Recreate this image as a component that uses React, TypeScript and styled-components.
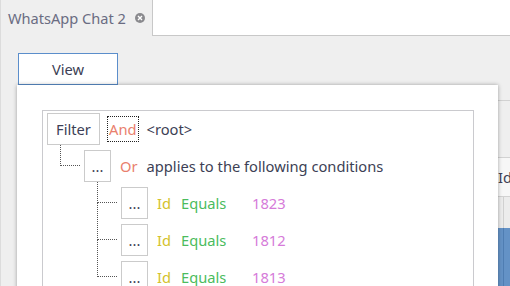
import React from "react";
import styled, { createGlobalStyle } from "styled-components";

const Global = createGlobalStyle`
  html, body { margin: 0; padding: 0; }
  body { font-family: "Noto Sans", "Open Sans", sans-serif; }
`;

const Page = styled.div`
  width: 510px;
  height: 286px;
  overflow: hidden;
  background: #ffffff;
  display: flex;
  flex-direction: column;
`;

const TabStrip = styled.div`
  display: flex;
  height: 36px;
  flex: none;
`;

const Tab = styled.div`
  width: 153px;
  background: #efefef;
  border-left: 1px solid #dcdcdc;
  border-right: 1px solid #c8c8c8;
  display: flex;
  align-items: center;
  padding-left: 7px;
  box-sizing: border-box;
  gap: 9px;
  font-size: 14.6px;
  color: #6a6c82;
`;

const CloseIcon = styled.span`
  width: 10px;
  height: 10px;
  border-radius: 50%;
  background: #8a8a8e;
  display: inline-flex;
  align-items: center;
  justify-content: center;
`;

const TabFiller = styled.div`
  flex: 1;
  border-bottom: 1px solid #c8c8c8;
`;

const Body = styled.div`
  flex: 1;
  background: #efefef;
  border-left: 1px solid #dcdcdc;
  position: relative;
  display: flex;
  flex-direction: column;
`;

const Toolbar = styled.div`
  display: flex;
  padding: 17px 0 0 17px;
`;

const ViewButton = styled.div`
  width: 100px;
  height: 32px;
  box-sizing: border-box;
  border: 1px solid #5b8ecb;
  background: #ffffff;
  display: flex;
  align-items: center;
  justify-content: center;
  font-size: 14.7px;
  color: #3d3f55;
`;

const DataArea = styled.div`
  margin-top: 15px;
  margin-left: 140px;
  border-top: 1px solid #d2d2d2;
  display: flex;
  flex-direction: column;
  flex: 1;
`;

const HeaderRow = styled.div`
  margin-top: 56px;
  height: 38px;
  border-top: 1px solid #d2d2d2;
  border-bottom: 1px solid #d2d2d2;
  background: #f7f7f7;
  display: flex;
  align-items: center;
  padding-left: 357px;
  font-size: 14.7px;
  color: #3d3f55;
`;

const FilterRowBg = styled.div`
  height: 31px;
  background: #ececec;
  display: flex;
`;

const ColumnCell = styled.div<{ $w: number }>`
  width: ${(p) => p.$w}px;
  border-right: 1px solid #d0d0d0;
  flex: none;
`;

const BlueRows = styled.div`
  flex: 1;
  background: #6492c6;
  display: flex;
`;

const BlueCell = styled.div<{ $w: number }>`
  width: ${(p) => p.$w}px;
  border-right: 1px solid #4f7db2;
  flex: none;
`;

const Popup = styled.div`
  position: absolute;
  left: 16px;
  top: 49px;
  width: 481px;
  height: 260px;
  background: #ffffff;
  box-shadow: 0 0 4px rgba(0, 0, 0, 0.35);
  padding: 25px 24px 0 25px;
  box-sizing: border-box;
`;

const FilterPanel = styled.div`
  border: 1px solid #cacace;
  border-bottom: none;
  height: 100%;
  padding: 2px 4px;
  box-sizing: border-box;
  display: flex;
  flex-direction: column;
  gap: 5px;
`;

const Row = styled.div<{ $indent: number; $first?: boolean; $connect?: boolean }>`
  position: relative;
  display: flex;
  align-items: center;
  height: 32px;
  margin-left: ${(p) => p.$indent}px;
  font-size: 14.7px;
  color: #3d3f55;
  flex: none;

  ${(p) =>
    p.$connect
      ? `
  &::before {
    content: "";
    position: absolute;
    left: -24px;
    top: ${p.$first ? -5 : -21}px;
    height: ${p.$first ? 21 : 37}px;
    width: 20px;
    border-left: 1px dotted #555;
    border-bottom: 1px dotted #555;
    box-sizing: border-box;
  }`
      : ""}
`;

const NodeBox = styled.div<{ $w: number }>`
  width: ${(p) => p.$w}px;
  height: 32px;
  box-sizing: border-box;
  border: 1px solid #cbcbcb;
  display: flex;
  align-items: center;
  justify-content: center;
  flex: none;
  color: #3d3f55;
`;

const Focus = styled.span`
  margin-left: 7px;
  height: 24px;
  padding: 0 1px;
  border: 1px dotted #222;
  display: flex;
  align-items: center;
  color: #e9806d;
`;

const Op = styled.span`
  margin-left: 9px;
  color: #e9806d;
`;

const Label = styled.span<{ $ml: number }>`
  margin-left: ${(p) => p.$ml}px;
`;

const Field = styled.span`
  margin-left: 9px;
  width: 24px;
  color: #d3c22c;
`;

const Operator = styled.span`
  width: 71px;
  color: #4bbc5d;
`;

const Value = styled.span`
  color: #d67bd9;
`;

const conditions = ["1823", "1812", "1813"];

export default function App() {
  return (
    <Page>
      <Global />
      <TabStrip>
        <Tab>
          WhatsApp Chat 2
          <CloseIcon>
            <svg width="6" height="6" viewBox="0 0 6 6">
              <path d="M1 1L5 5M5 1L1 5" stroke="#fff" strokeWidth="1.4" />
            </svg>
          </CloseIcon>
        </Tab>
        <TabFiller />
      </TabStrip>
      <Body>
        <Toolbar>
          <ViewButton>View</ViewButton>
        </Toolbar>
        <DataArea>
          <HeaderRow>Id</HeaderRow>
          <FilterRowBg>
            <ColumnCell $w={362} />
          </FilterRowBg>
          <BlueRows>
            <BlueCell $w={362} />
          </BlueRows>
        </DataArea>
        <Popup>
          <FilterPanel>
            <Row $indent={0}>
              <NodeBox $w={53}>Filter</NodeBox>
              <Focus>And</Focus>
              <Label $ml={8}>&lt;root&gt;</Label>
            </Row>
            <Row $indent={37} $first $connect>
              <NodeBox $w={27}>...</NodeBox>
              <Op>Or</Op>
              <Label $ml={9}>applies to the following conditions</Label>
            </Row>
            {conditions.map((v, i) => (
              <Row key={v} $indent={74} $first={i === 0} $connect>
                <NodeBox $w={27}>...</NodeBox>
                <Field>Id</Field>
                <Operator>Equals</Operator>
                <Value>{v}</Value>
              </Row>
            ))}
          </FilterPanel>
        </Popup>
      </Body>
    </Page>
  );
}
